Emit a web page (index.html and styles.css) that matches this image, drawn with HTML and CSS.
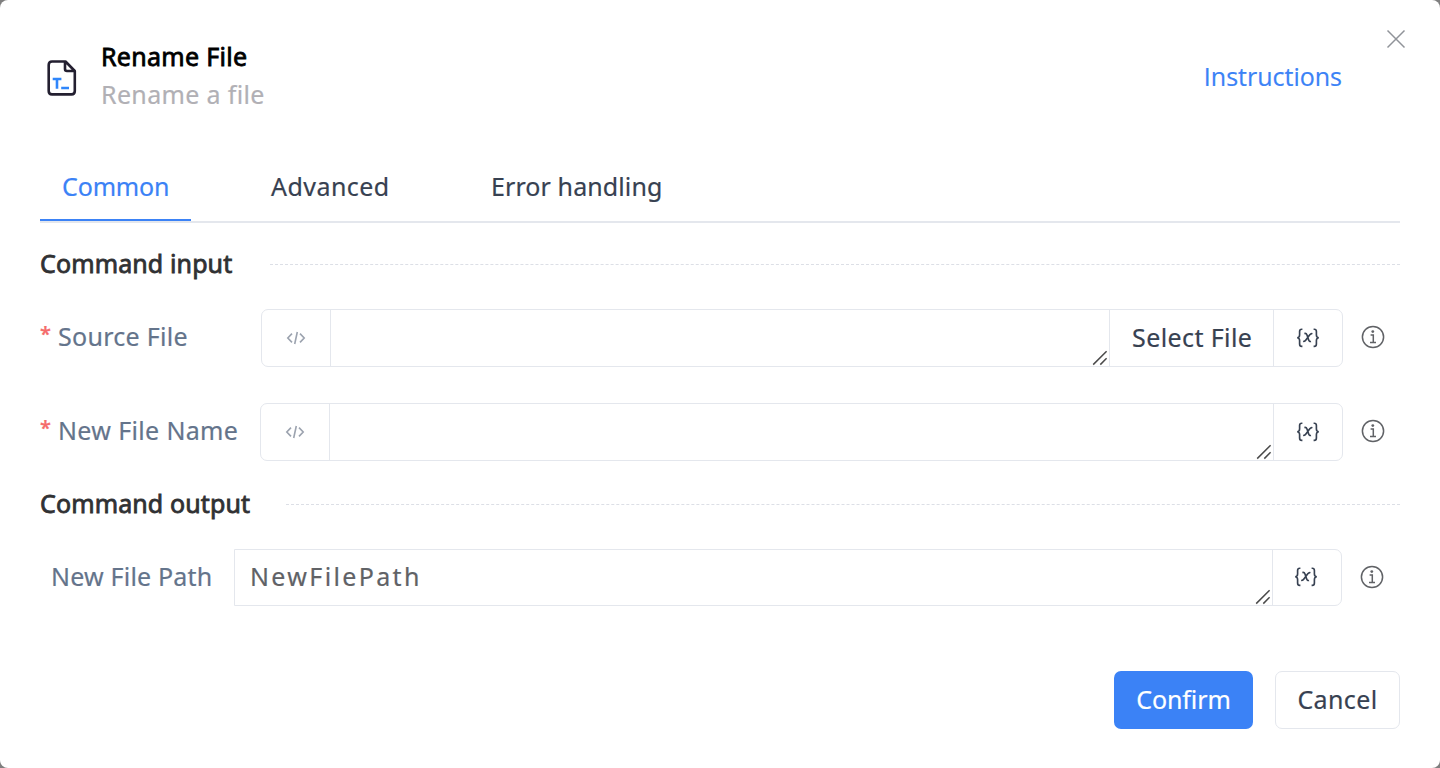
FILE: index.html
```html
<!DOCTYPE html>
<html lang="en">
<head>
<meta charset="utf-8">
<title>Rename File</title>
<link rel="stylesheet" href="styles.css">
</head>
<body>
<svg class="defs" width="0" height="0">
  <symbol id="code" viewBox="0 0 20 16"><path d="M6 3.6 1.8 8 6 12.4M14 3.6 18.2 8 14 12.4M11.3 2 8.7 14" fill="none" stroke="currentColor" stroke-width="1.6"/></symbol>
  <symbol id="var" viewBox="0 0 24 20"><path d="M6.4 1.2H5.8Q3.6 1.2 3.6 3.4V7Q3.6 9.6 1.2 9.8Q3.6 10 3.6 12.6V16Q3.6 18.4 5.8 18.4H6.4M17.6 1.2H18.2Q20.4 1.2 20.4 3.4V7Q20.4 9.6 22.8 9.8Q20.4 10 20.4 12.6V16Q20.4 18.4 18.2 18.4H17.6M8.4 5.6Q10.2 5 11 7L12.7 12Q13.3 14 15 13.4M16.4 5.7Q15 5.2 13.8 6.8L9.9 12Q8.7 13.8 7.2 13.3" fill="none" stroke="currentColor" stroke-width="1.65"/></symbol>
  <symbol id="info" viewBox="0 0 24 24"><circle cx="12" cy="12" r="10.6" fill="none" stroke="currentColor" stroke-width="1.5"/><circle cx="11.8" cy="6.6" r="1.4" fill="currentColor"/><path d="M9.6 10.1H12.3V17.4M9 17.4H15" fill="none" stroke="currentColor" stroke-width="1.5"/></symbol>
  <symbol id="grip" viewBox="0 0 16 16"><path d="M1.2 14.6 14.6 1.2M8.3 14.6 14.6 8.3" fill="none" stroke="currentColor" stroke-width="1.5"/></symbol>
</svg>
<main class="dialog">
  <button class="close" aria-label="Close"><svg viewBox="0 0 20 20"><path d="M1.5 1.5 18.5 18.5M18.5 1.5 1.5 18.5" fill="none" stroke="currentColor" stroke-width="1.5"/></svg></button>
  <header class="header">
    <svg class="file-icon" viewBox="0 0 30 36"><path d="M5 1.5H18.5L27.8 11V31Q27.8 34.4 24.5 34.4H5Q1.7 34.4 1.7 31V5Q1.7 1.5 5 1.5ZM18 2V9Q18 11 20 11H27.6" fill="none" stroke="#231f30" stroke-width="2.6" stroke-linejoin="round"/><path d="M5.7 19H14.4M10 19V28.8M14.2 28H22" fill="none" stroke="#2f86fb" stroke-width="2.6"/></svg>
    <div class="titles">
      <h1 class="title">Rename File</h1>
      <p class="subtitle">Rename a file</p>
    </div>
    <a class="instructions">Instructions</a>
  </header>
  <nav class="tabs">
    <a class="tab tab-active">Common</a>
    <a class="tab tab-advanced">Advanced</a>
    <a class="tab tab-error">Error handling</a>
  </nav>
  <h2 class="section"><span class="section-input">Command input</span></h2>
  <div class="row">
    <label class="label label-source"><b class="star">*</b><span>Source File</span></label>
    <div class="field">
      <span class="cell"><svg class="code"><use href="#code"/></svg></span>
      <div class="area"><svg class="grip"><use href="#grip"/></svg></div>
      <span class="select">Select File</span>
      <span class="cell cell-end"><svg class="var"><use href="#var"/></svg></span>
    </div>
    <svg class="info"><use href="#info"/></svg>
  </div>
  <div class="row">
    <label class="label label-name"><b class="star">*</b><span>New File Name</span></label>
    <div class="field">
      <span class="cell"><svg class="code"><use href="#code"/></svg></span>
      <div class="area"><svg class="grip"><use href="#grip"/></svg></div>
      <span class="cell cell-end"><svg class="var"><use href="#var"/></svg></span>
    </div>
    <svg class="info"><use href="#info"/></svg>
  </div>
  <h2 class="section section-second"><span class="section-output">Command output</span></h2>
  <div class="row row-output">
    <label class="label label-path"><span>New File Path</span></label>
    <div class="field field-output">
      <div class="area"><span class="value">NewFilePath</span><svg class="grip"><use href="#grip"/></svg></div>
      <span class="cell cell-end"><svg class="var"><use href="#var"/></svg></span>
    </div>
    <svg class="info"><use href="#info"/></svg>
  </div>
  <footer class="footer">
    <button class="btn btn-confirm">Confirm</button>
    <button class="btn btn-cancel">Cancel</button>
  </footer>
</main>
</body>
</html>
```
FILE: styles.css
```css
* { box-sizing: border-box; }
body { margin: 0; background: #7f7f7f; font: 25px/38px "Noto Sans", sans-serif; color: #374151; overflow: hidden; -webkit-text-stroke: .2px; }
h1, h2, p { margin: 0; font-size: inherit; font-weight: 400; }
svg { display: block; flex: none; }
span, a, h1, p, button { white-space: nowrap; }
.defs { position: absolute; }
.dialog { position: relative; width: 1440px; height: 768px; padding: 37px 40px 0; background: #fff; border-radius: 8px; display: flex; flex-direction: column; }
.close { position: absolute; top: 29px; right: 34px; width: 20px; height: 20px; padding: 0; border: 0; background: none; color: #909399; }
.header { display: flex; align-items: center; height: 76px; padding: 0 58px 0 7px; }
.file-icon { width: 30px; height: 36px; margin: 5px 24px 0 0; }
.titles { flex: 1; }
.title { color: #000; letter-spacing: .3px; -webkit-text-stroke: .8px #000; }
.subtitle { color: #b1b0b5; letter-spacing: .35px; }
.instructions { margin-top: 2px; font-family: "Open Sans", "Noto Sans", sans-serif; color: #3b82f6; }
.tabs { display: flex; gap: 58px; height: 73px; margin-top: 37px; border-bottom: 2px solid #e4e7ed; }
.tab { height: 71px; padding: 17px 0 0 22px; letter-spacing: .1px; }
.tab-active { width: 151px; color: #3b82f6; border-bottom: 2px solid #3b82f6; letter-spacing: -.15px; }
.tab-advanced { width: 162px; letter-spacing: .45px; }
.section { display: flex; align-items: center; height: 38px; margin: 22px 0 26px; color: #303133; }
.section::after { content: ""; flex: 1; border-top: 1px dashed #dcdfe6; }
.section span { height: 38px; line-height: 36px; letter-spacing: .12px; -webkit-text-stroke: .8px #303133; }
.section-input { width: 230px; }
.section-output { width: 246px; }
.section-second { margin: -12px 0 26px; }
.row { display: flex; align-items: center; height: 58px; margin-bottom: 36px; }
.row-output { height: 57px; margin-bottom: 65px; }
.label { display: flex; color: #64748b; height: 58px; line-height: 54px; letter-spacing: .28px; }
.label-source { width: 221px; }
.label-name { width: 220px; letter-spacing: .35px; }
.label-path { width: 194px; padding-left: 11px; letter-spacing: .2px; }
.star { width: 18px; color: #f56c6c; font-size: 20px; font-weight: 600; line-height: 50px; }
.field { display: flex; flex: 1; height: 100%; border: 1px solid #e4e7ed; border-radius: 7px; }
.field-output { border-radius: 0 7px 7px 0; }
.cell { display: flex; align-items: center; justify-content: center; width: 69px; border-right: 1px solid #e4e7ed; color: #9ca3af; }
.cell-end { border: 0; border-left: 1px solid #e4e7ed; color: #374151; }
.area { display: flex; align-items: flex-end; justify-content: flex-end; flex: 1; }
.value { flex: 1; height: 55px; line-height: 52px; padding-left: 15px; color: #606266; letter-spacing: 2.35px; }
.select { width: 164px; padding-left: 22px; line-height: 54px; border-left: 1px solid #e4e7ed; letter-spacing: .4px; }
.code { width: 20px; height: 16px; }
.var { width: 24px; height: 20px; margin-top: -1px; }
.row-output .var { margin: -2px 2px 0 0; }
.grip { width: 16px; height: 16px; margin-right: 1px; color: #4b4b4b; }
.info { width: 24px; height: 24px; margin: -2px 15px 0 18px; color: #606266; }
.row-output .info { margin-right: 16px; }
.footer { display: flex; justify-content: flex-end; gap: 22px; }
.btn { height: 58px; padding: 0 0 2px; font: inherit; border-radius: 7px; }
.btn-confirm { width: 139px; border: 0; background: #3b82f6; color: #fff; letter-spacing: -.1px; }
.btn-cancel { width: 125px; border: 1px solid #e4e7ed; background: #fff; color: #374151; letter-spacing: .4px; }
```
